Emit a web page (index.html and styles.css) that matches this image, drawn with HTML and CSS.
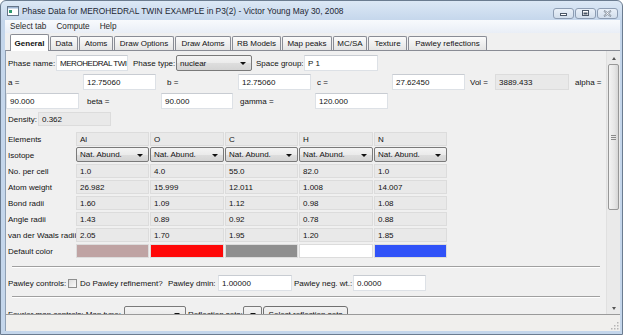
FILE: index.html
```html
<!DOCTYPE html>
<html lang="en">
<head>
    <meta charset="UTF-8">
    <title>Phase Data</title>
    <link rel="stylesheet" href="styles.css">
</head>
<body>
    <div class="window">
        <div class="titlebar">
            <svg class="app-icon" width="12" height="10" viewBox="0 0 12 10">
                <rect x="0.5" y="0.5" width="11" height="9" fill="#fff" stroke="#66768a"/>
                <rect x="1" y="1" width="10" height="1.5" fill="#9fb6d4"/>
                <rect x="2" y="4" width="3" height="3" fill="#2f9a70"/>
            </svg>
            <span class="title">Phase Data for MEROHEDRAL TWIN EXAMPLE in P3(2) - Victor Young May 30, 2008</span>
            <div class="caption-buttons">
                <span class="cap-btn">
                    <svg width="9" height="7" viewBox="0 0 9 7"><rect x="1.5" y="3.5" width="6" height="2" fill="#fff" stroke="#4b5767"/></svg>
                </span>
                <span class="cap-btn">
                    <svg width="9" height="7" viewBox="0 0 9 7"><rect x="1.5" y="0.5" width="6" height="5" fill="#fff" stroke="#4b5767"/><rect x="2.5" y="2.5" width="4" height="2" fill="#4b5767"/></svg>
                </span>
                <span class="cap-btn">
                    <svg width="9" height="7" viewBox="0 0 9 7"><path d="M1.5 0.5 L4.5 2.5 L7.5 0.5 L8 1.5 L5.5 3.5 L8 5.5 L7.5 6.5 L4.5 4.5 L1.5 6.5 L1 5.5 L3.5 3.5 L1 1.5 Z" fill="#fff" stroke="#6c7888" stroke-width="0.8"/></svg>
                </span>
            </div>
        </div>

        <div class="menubar">
            <span>Select tab</span>
            <span>Compute</span>
            <span>Help</span>
        </div>

        <div class="tabs">
            <span class="tab active w39">General</span>
            <span class="tab w28">Data</span>
            <span class="tab w34">Atoms</span>
            <span class="tab w60">Draw Options</span>
            <span class="tab w56">Draw Atoms</span>
            <span class="tab w49">RB Models</span>
            <span class="tab w50">Map peaks</span>
            <span class="tab w34">MC/SA</span>
            <span class="tab w39">Texture</span>
            <span class="tab w79">Pawley reflections</span>
        </div>

        <div class="pane">
            <div class="scroll-view">
                <div class="content">
                    <div class="row">
                        <span class="lbl w48">Phase name:</span>
                        <span class="field tight w72">MEROHEDRAL TWI</span>
                        <span class="lbl w43 ml5">Phase type:</span>
                        <span class="combo w76">nuclear<i class="arrow"></i></span>
                        <span class="lbl w48 ml4">Space group:</span>
                        <span class="field w74">P 1</span>
                    </div>

                    <div class="row">
                        <span class="lbl w75">a =</span>
                        <span class="field w73">12.75060</span>
                        <span class="lbl w71 ml11">b =</span>
                        <span class="field w73">12.75060</span>
                        <span class="lbl w75 ml6">c =</span>
                        <span class="field w73">27.62450</span>
                        <span class="lbl w25 ml5">Vol =</span>
                        <span class="field readonly w74">3889.433</span>
                        <span class="lbl ml6">alpha =</span>
                    </div>

                    <div class="row flush">
                        <span class="field w73">90.000</span>
                        <span class="lbl w74 ml8">beta =</span>
                        <span class="field w72">90.000</span>
                        <span class="lbl w75 ml7">gamma =</span>
                        <span class="field w73">120.000</span>
                    </div>

                    <div class="row short">
                        <span class="lbl w30">Density:</span>
                        <span class="field readonly w73">0.362</span>
                    </div>

                    <div class="elements">
                        <span class="lbl">Elements</span>
                        <span class="cell">Al</span>
                        <span class="cell">O</span>
                        <span class="cell">C</span>
                        <span class="cell">H</span>
                        <span class="cell">N</span>

                        <span class="lbl">Isotope</span>
                        <span class="combo">Nat. Abund.<i class="arrow"></i></span>
                        <span class="combo">Nat. Abund.<i class="arrow"></i></span>
                        <span class="combo">Nat. Abund.<i class="arrow"></i></span>
                        <span class="combo">Nat. Abund.<i class="arrow"></i></span>
                        <span class="combo">Nat. Abund.<i class="arrow"></i></span>

                        <span class="lbl">No. per cell</span>
                        <span class="cell">1.0</span>
                        <span class="cell">4.0</span>
                        <span class="cell">55.0</span>
                        <span class="cell">82.0</span>
                        <span class="cell">1.0</span>

                        <span class="lbl">Atom weight</span>
                        <span class="cell">26.982</span>
                        <span class="cell">15.999</span>
                        <span class="cell">12.011</span>
                        <span class="cell">1.008</span>
                        <span class="cell">14.007</span>

                        <span class="lbl">Bond radii</span>
                        <span class="cell">1.60</span>
                        <span class="cell">1.09</span>
                        <span class="cell">1.12</span>
                        <span class="cell">0.98</span>
                        <span class="cell">1.08</span>

                        <span class="lbl">Angle radii</span>
                        <span class="cell">1.43</span>
                        <span class="cell">0.89</span>
                        <span class="cell">0.92</span>
                        <span class="cell">0.78</span>
                        <span class="cell">0.88</span>

                        <span class="lbl">van der Waals radii</span>
                        <span class="cell">2.05</span>
                        <span class="cell">1.70</span>
                        <span class="cell">1.95</span>
                        <span class="cell">1.20</span>
                        <span class="cell">1.85</span>

                        <span class="lbl">Default color</span>
                        <span class="swatch al"></span>
                        <span class="swatch o"></span>
                        <span class="swatch c"></span>
                        <span class="swatch h"></span>
                        <span class="swatch n"></span>
                    </div>

                    <div class="separator"></div>

                    <div class="row pawley">
                        <span class="lbl w60">Pawley controls:</span>
                        <span class="checkbox"></span>
                        <span class="lbl w88 ml3">Do Pawley refinement?</span>
                        <span class="lbl w50">Pawley dmin:</span>
                        <span class="field w74">1.00000</span>
                        <span class="lbl w59 ml2">Pawley neg. wt.:</span>
                        <span class="field w73">0.0000</span>
                    </div>

                    <div class="separator flat"></div>

                    <div class="row fourier">
                        <span class="lbl w116">Fourier map controls: Map type:</span>
                        <span class="combo w62"><i class="arrow"></i></span>
                        <span class="lbl w55 ml2">Reflection sets:</span>
                        <span class="combo w19"><i class="arrow"></i></span>
                        <span class="button w85 ml1">Select reflection sets</span>
                    </div>
                </div>

                <div class="vscroll">
                    <span class="scroll-arrow up"></span>
                    <span class="thumb"><i></i><i></i><i></i></span>
                    <span class="scroll-arrow down"></span>
                </div>
            </div>

            <div class="statusbar">
                <svg class="grip" width="8" height="8" viewBox="0 0 8 8">
                    <g fill="#b5b5b5">
                        <rect x="6" y="0" width="1.5" height="1.5"/>
                        <rect x="3" y="3" width="1.5" height="1.5"/>
                        <rect x="6" y="3" width="1.5" height="1.5"/>
                        <rect x="0" y="6" width="1.5" height="1.5"/>
                        <rect x="3" y="6" width="1.5" height="1.5"/>
                        <rect x="6" y="6" width="1.5" height="1.5"/>
                    </g>
                </svg>
            </div>
        </div>
    </div>
</body>
</html>
```

FILE: styles.css
```css
:root {
    --frame: #c4d6eb;
    --face: #f0f0f0;
    --tab-border: #898c95;
    --combo-border: #7a7a7a;
}

* {
    margin: 0;
    padding: 0;
    box-sizing: border-box;
}

body {
    width: 624px;
    height: 336px;
    overflow: hidden;
    background-color: #ffffff;
    font-family: "Liberation Sans", Arial, sans-serif;
    font-size: 8px;
    color: #111;
}

.window {
    width: 623px;
    height: 335px;
    display: flex;
    flex-direction: column;
    padding: 0 2px 3px 4px;
    border: 1px solid #6b7c90;
    border-radius: 6px 6px 0 0;
    background: linear-gradient(#dce8f5, #c4d6eb 20px, var(--frame));
}

/* title bar */
.titlebar {
    height: 19px;
    display: flex;
    align-items: center;
    flex: none;
}

.app-icon {
    margin-left: 2px;
    margin-right: 3px;
}

.title {
    font-size: 8.4px;
    color: #1d2733;
    white-space: nowrap;
}

.caption-buttons {
    margin-left: auto;
    margin-right: 2px;
    align-self: flex-start;
    margin-top: 7px;
    display: flex;
    gap: 1px;
}

.cap-btn {
    width: 21px;
    height: 11px;
    display: flex;
    align-items: center;
    justify-content: center;
    border: 1px solid #8d9db3;
    border-radius: 3px;
    background: linear-gradient(#e9f0f8, #d2deec);
}

/* menu */
.menubar {
    height: 13px;
    flex: none;
    display: flex;
    align-items: center;
    gap: 10px;
    padding-left: 5px;
    background: linear-gradient(#f8fafd, #e9eef6);
    color: #2a2a2a;
    font-size: 8.2px;
}

/* tabs */
.tabs {
    height: 17px;
    flex: none;
    display: flex;
    align-items: flex-end;
    gap: 1px;
    padding-left: 5px;
    background-color: var(--face);
    position: relative;
    z-index: 1;
}

.tab {
    height: 14px;
    display: flex;
    align-items: center;
    justify-content: center;
    white-space: nowrap;
    border: 1px solid var(--tab-border);
    border-bottom: none;
    border-radius: 2px 2px 0 0;
    background: linear-gradient(#fbfbfb, #e4e4e4);
}

.tab.active {
    height: 17px;
    margin-bottom: -1px;
    font-weight: bold;
    background: #ffffff;
}

/* main pane */
.pane {
    flex: 1;
    display: flex;
    flex-direction: column;
    border-left: 1px solid #8fa0b4;
    border-top: 1px solid var(--tab-border);
    background-color: var(--face);
    min-height: 0;
}

.scroll-view {
    height: 264px;
    flex: none;
    display: flex;
    border-bottom: 1px solid #9a9a9a;
}

.content {
    flex: 1;
    overflow: hidden;
    padding-top: 4px;
}

.row {
    height: 16px;
    display: flex;
    align-items: center;
    padding-left: 2px;
    margin-bottom: 3px;
    white-space: nowrap;
}

.row.flush {
    padding-left: 0;
}

.row.short {
    height: 14px;
    margin-bottom: 6px;
}

.lbl {
    flex: none;
    white-space: nowrap;
}

.field {
    flex: none;
    height: 100%;
    display: flex;
    align-items: center;
    padding-left: 3px;
    overflow: hidden;
    white-space: nowrap;
    background-color: #ffffff;
    border: 1px solid #dde1e6;
    border-top-color: #c8ccd2;
}

.field.tight {
    letter-spacing: -0.45px;
}

.field.readonly {
    background-color: #e9e9e9;
    border-color: #dcdcdc;
}

.combo {
    flex: none;
    height: 100%;
    display: flex;
    align-items: center;
    padding-left: 3px;
    position: relative;
    white-space: nowrap;
    border: 1px solid var(--combo-border);
    border-radius: 2px;
    background: linear-gradient(#f4f4f4, #ebebeb 50%, #dedede 50%, #d4d4d4);
}

.arrow {
    position: absolute;
    right: 5px;
    top: 50%;
    margin-top: -1px;
    border-left: 3px solid transparent;
    border-right: 3px solid transparent;
    border-top: 3px solid #111;
}

.button {
    flex: none;
    height: 100%;
    display: flex;
    align-items: center;
    justify-content: center;
    white-space: nowrap;
    border: 1px solid #707070;
    border-radius: 3px;
    background: linear-gradient(#f2f2f2, #ebebeb 50%, #dddddd 50%, #cfcfcf);
}

/* element table */
.elements {
    display: grid;
    grid-template-columns: 67px 73px 74px 73px 74px 73px;
    grid-auto-rows: 14px;
    column-gap: 1px;
    row-gap: 2px;
    padding-left: 2px;
}

.elements .lbl {
    display: flex;
    align-items: center;
}

.elements .combo {
    height: 15px;
    margin-top: -1px;
}

.cell {
    display: flex;
    align-items: center;
    padding-left: 3px;
    background-color: #e9e9e9;
    border: 1px solid #dcdcdc;
}

.swatch {
    border: 1px solid #dcdcdc;
}

.swatch.al { background-color: #bfa3a3; }
.swatch.o { background-color: #ff0808; }
.swatch.c { background-color: #8f8f8f; }
.swatch.h { background-color: #ffffff; }
.swatch.n { background-color: #3052f8; }

.separator {
    height: 2px;
    margin: 8px 6px 0 6px;
    border-top: 1px solid #a0a0a0;
    border-bottom: 1px solid #ffffff;
}

.separator.flat {
    margin-top: 0;
}

.row.pawley {
    margin-top: 7px;
    margin-bottom: 5px;
}

.row.fourier {
    margin-top: 8px;
}

.checkbox {
    flex: none;
    width: 9px;
    height: 9px;
    border: 1px solid #8e8f8f;
    background: linear-gradient(135deg, #dcdcdc, #fbfbfb);
}

/* scrollbar */
.vscroll {
    width: 14px;
    flex: none;
    display: flex;
    flex-direction: column;
    align-items: center;
    padding: 1px 1px 0 1px;
    background-color: #eaeaea;
    border-left: 1px solid #e0e0e0;
}

.scroll-arrow {
    height: 12px;
    width: 100%;
    flex: none;
    display: flex;
    align-items: center;
    justify-content: center;
}

.scroll-arrow::after {
    content: "";
    border-left: 2.5px solid transparent;
    border-right: 2.5px solid transparent;
}

.scroll-arrow.up::after {
    border-bottom: 3px solid #555;
}

.scroll-arrow.down {
    margin-top: auto;
}

.scroll-arrow.down::after {
    border-top: 3px solid #555;
}

.thumb {
    width: 11px;
    height: 146px;
    display: flex;
    flex-direction: column;
    align-items: center;
    justify-content: center;
    gap: 1px;
    border: 1px solid #979797;
    border-radius: 2px;
    background: linear-gradient(90deg, #f3f3f3, #e6e6e6 60%, #d6d6d6);
}

.thumb i {
    width: 5px;
    height: 1px;
    background-color: #8a8a8a;
}

/* status bar */
.statusbar {
    flex: 1;
    display: flex;
    justify-content: flex-end;
    align-items: flex-end;
    padding: 0 1px 1px 0;
    background-color: #f0efed;
}

/* sizes */
.w19 { width: 19px; }
.w25 { width: 25px; }
.w30 { width: 30px; }
.w28 { width: 28px; }
.w34 { width: 34px; }
.w39 { width: 39px; }
.w43 { width: 43px; }
.w48 { width: 48px; }
.w49 { width: 49px; }
.w50 { width: 50px; }
.w55 { width: 55px; }
.w56 { width: 56px; }
.w59 { width: 59px; }
.w60 { width: 60px; }
.w62 { width: 62px; }
.w71 { width: 71px; }
.w72 { width: 72px; }
.w73 { width: 73px; }
.w74 { width: 74px; }
.w75 { width: 75px; }
.w76 { width: 76px; }
.w79 { width: 79px; }
.w85 { width: 85px; }
.w88 { width: 88px; }
.w116 { width: 116px; }

.ml1 { margin-left: 1px; }
.ml2 { margin-left: 2px; }
.ml3 { margin-left: 3px; }
.ml4 { margin-left: 4px; }
.ml5 { margin-left: 5px; }
.ml6 { margin-left: 6px; }
.ml7 { margin-left: 7px; }
.ml8 { margin-left: 8px; }
.ml11 { margin-left: 11px; }
```
